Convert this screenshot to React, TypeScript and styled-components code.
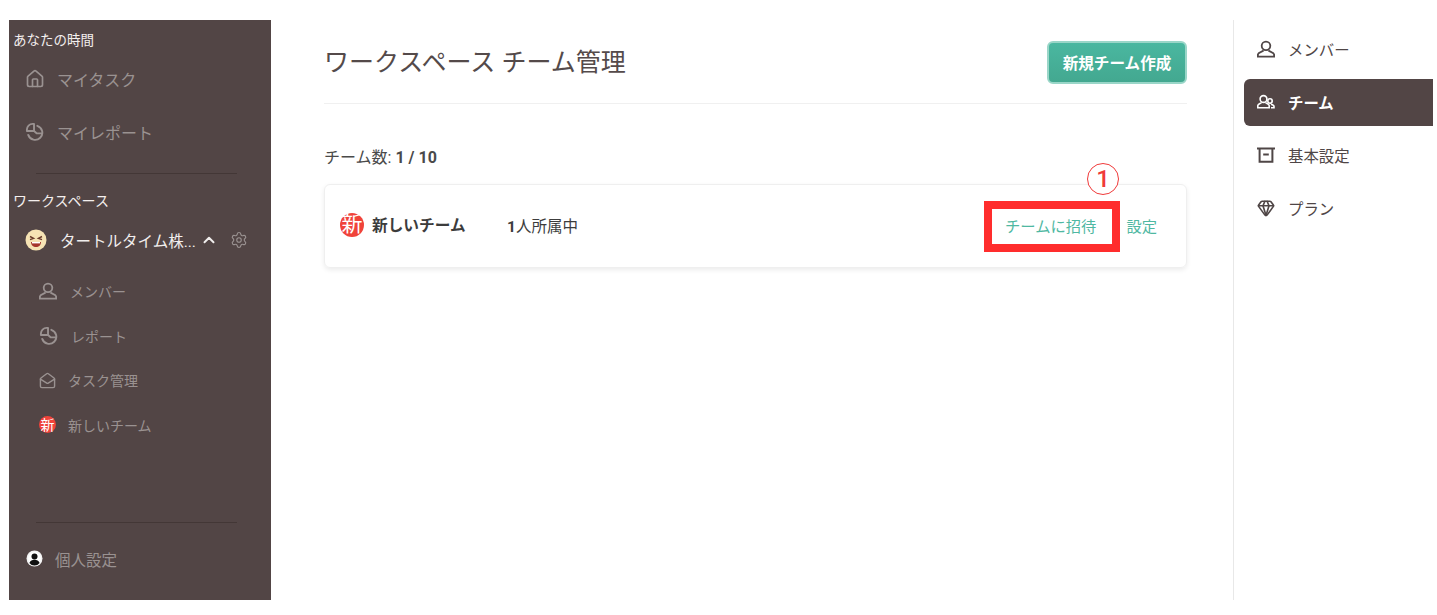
import React from "react"
import styled, { createGlobalStyle } from "styled-components"
import { House, ChevronUp, Settings, MailOpen, Gem } from "lucide-react"

const GlobalStyle = createGlobalStyle`
  html, body {
    margin: 0;
    background: #fff;
    font-family: Roboto, "Noto Sans CJK JP", sans-serif;
  }
`

const brown = "#524545"
const green = "#4fb8a2"
const muted = "#9a9291"

function PieIcon({ size = 20 }: { size?: number }) {
  return (
    <svg width={size} height={size} viewBox="0 0 20 20" fill="none" stroke="currentColor" strokeWidth="2" strokeLinejoin="round" strokeLinecap="round">
      <path d="M2 9.5V8a6 6 0 0 1 6-6h1.5v7.5z" />
      <path d="M13 4a7.6 7.6 0 1 1-9.6 9.6" />
      <path d="M9.5 9.5 12.5 12H17.5" />
    </svg>
  )
}

function UserIcon({ size = 20 }: { size?: number }) {
  return (
    <svg width={size} height={size} viewBox="0 0 20 20" fill="none" stroke="currentColor" strokeWidth="2">
      <circle cx="10" cy="6.5" r="4.8" />
      <path d="M7.2 11.5c-.6 1.7-5.8 1.7-6.2 4.4v2.6h18v-2.6c-.4-2.7-5.6-2.7-6.2-4.4" />
    </svg>
  )
}

function TeamIcon() {
  return (
    <svg width="18" height="16" viewBox="0 0 18 16" fill="none" stroke="#fff" strokeWidth="1.6">
      <circle cx="6.5" cy="5" r="3.4" />
      <path d="M4.4 8.5c-.4 1-3.4 1.3-3.6 3v2.2h11.4v-2.2c-.2-1.7-3.2-2-3.6-3" />
      <circle cx="13" cy="7" r="2.2" />
      <path d="M14 10.2c1.5.4 3 .8 3 2v1.5h-3" />
    </svg>
  )
}

function BoxIcon() {
  return (
    <svg width="18" height="18" viewBox="0 0 18 18" fill="none" stroke="currentColor" strokeWidth="2">
      <path d="M0 2.5h18" />
      <path d="M2.6 2.5v13.2h12.8V2.5" />
      <path d="M6.2 8.5h5.6" />
    </svg>
  )
}

function FaceIcon() {
  return (
    <svg width="22" height="22" viewBox="0 0 22 22">
      <circle cx="11" cy="11" r="10.5" fill="#f6e3b4" />
      <path d="M5 7.5l3.6 1.8L5 10.6M17 7.5l-3.6 1.8 3.6 1.3" fill="none" stroke="#6b3d2c" strokeWidth="1.4" />
      <path d="M6 13h10c0 3-2.2 5-5 5s-5-2-5-5z" fill="#a5352c" />
      <path d="M7 13h8v1.4H7z" fill="#fff" />
    </svg>
  )
}

function AccountIcon() {
  return (
    <svg width="17" height="17" viewBox="0 0 17 17">
      <circle cx="8.5" cy="8.5" r="8" fill="#f4f4f4" />
      <circle cx="8.5" cy="8.5" r="6.4" fill="#fff" />
      <circle cx="8.5" cy="6.4" r="3" fill="#111" />
      <path d="M3.4 13c.8-2.4 2.8-3.2 5.1-3.2s4.3.8 5.1 3.2a6.4 6.4 0 0 1-10.2 0z" fill="#111" />
    </svg>
  )
}

const Page = styled.div`
  width: 1437px;
  height: 615px;
  box-sizing: border-box;
  padding: 20px 4px 15px 9px;
  display: flex;
  overflow: hidden;
`

const Sidebar = styled.aside`
  width: 262px;
  flex: none;
  background: ${brown};
  display: flex;
  flex-direction: column;
`

const SectionLabel = styled.div<{ $top: number; $size?: number }>`
  color: #f4efee;
  font-size: ${(p) => p.$size ?? 14}px;
  line-height: 20px;
  padding-left: 4px;
  margin-top: ${(p) => p.$top}px;
`

const NavRow = styled.div<{ $indent: number; $height: number; $gap: number; $size?: number; $top?: number; $bottom?: number }>`
  display: flex;
  align-items: center;
  height: ${(p) => p.$height}px;
  margin: ${(p) => p.$top ?? 0}px 0 ${(p) => p.$bottom ?? 0}px;
  padding-left: ${(p) => p.$indent}px;
  gap: ${(p) => p.$gap}px;
  color: ${muted};
  font-size: ${(p) => p.$size ?? 16}px;
`

const Divider = styled.div<{ $top: number }>`
  width: 201px;
  height: 1px;
  background: #433736;
  margin: ${(p) => p.$top}px 0 0 27px;
`

const WorkspaceRow = styled.div`
  display: flex;
  align-items: center;
  height: 40px;
  margin-top: 9px;
  padding-left: 16px;
  color: #f1eeed;
  font-size: 15.5px;
`

const WorkspaceName = styled.span`
  margin-left: 13px;
  width: 140px;
  white-space: nowrap;
`

const GearButton = styled.span`
  display: flex;
  color: ${muted};
  margin-left: 12px;
`

const Spacer = styled.div`
  flex: 1;
`

const NewBadge = styled.span<{ $size: number }>`
  display: inline-flex;
  align-items: center;
  justify-content: center;
  flex: none;
  width: ${(p) => p.$size}px;
  height: ${(p) => p.$size}px;
  border-radius: 50%;
  background: #f0433a;
  color: #fff;
  font-size: ${(p) => p.$size - 3}px;
  line-height: 1;
`

const Main = styled.main`
  width: 863px;
  flex: none;
  margin-left: 53px;
`

const Header = styled.header`
  display: flex;
  align-items: center;
  justify-content: space-between;
  height: 83px;
  border-bottom: 1px solid #f0f0f0;
`

const Title = styled.h1`
  margin: 0 0 3px;
  font-size: 25px;
  font-weight: 400;
  color: #544a4a;
`

const PrimaryButton = styled.button`
  width: 140px;
  height: 43px;
  margin-top: 2px;
  padding: 0 0 2px;
  border: 2px solid #9ad6c8;
  border-radius: 6px;
  background: linear-gradient(#4ab7a0, #43a890);
  color: #fff;
  font: 700 15.6px Roboto, "Noto Sans CJK JP", sans-serif;
`

const TeamCount = styled.div`
  margin-top: 44px;
  font-size: 16px;
  line-height: 20px;
  color: #4a4a4a;
  b {
    font-weight: 700;
  }
`

const TeamCard = styled.div`
  position: relative;
  display: flex;
  align-items: center;
  box-sizing: border-box;
  height: 84px;
  margin-top: 16px;
  padding: 0 29px 3px 15px;
  border: 1px solid #efefef;
  border-radius: 6px;
  box-shadow: 0 2px 5px rgba(0, 0, 0, 0.08);
  color: #3c3c3c;
`

const TeamName = styled.span`
  margin-left: 8px;
  width: 135px;
  font-size: 15.7px;
  font-weight: 700;
`

const Members = styled.span`
  font-size: 15.5px;
  b {
    font-weight: 700;
  }
`

const CardActions = styled.div`
  display: flex;
  gap: 30px;
  margin-left: auto;
  color: ${green};
  font-size: 15.3px;
`

// annotations laid over the screenshot
const Highlight = styled.div`
  position: absolute;
  left: 659px;
  top: 16px;
  width: 136px;
  height: 51px;
  box-sizing: border-box;
  border: 8px solid #ff2d2d;
`

const StepMark = styled.span`
  position: absolute;
  left: 762px;
  top: -22px;
  width: 32px;
  height: 32px;
  box-sizing: border-box;
  border: 1.5px solid #f03a3a;
  border-radius: 50%;
  display: flex;
  align-items: center;
  justify-content: center;
  background: #fff;
  color: #f03a3a;
  font-size: 24px;
  font-weight: 500;
`

const RightNav = styled.nav`
  width: 200px;
  flex: none;
  margin-left: 46px;
  border-left: 1px solid #e8e8e8;
  padding: 6px 0 0 10px;
  box-sizing: border-box;
`

const TabRow = styled.div<{ $active?: boolean }>`
  display: flex;
  align-items: center;
  box-sizing: border-box;
  gap: 13px;
  height: 47px;
  margin-bottom: 6px;
  padding: 0 0 2px 13px;
  border-radius: 6px 0 0 6px;
  font-size: 15.4px;
  font-weight: ${(p) => (p.$active ? 700 : 400)};
  background: ${(p) => (p.$active ? brown : "transparent")};
  color: ${(p) => (p.$active ? "#fff" : "#4f4646")};
`

export default function App() {
  return (
    <>
      <GlobalStyle />
      <Page>
        <Sidebar>
          <SectionLabel $top={10} $size={13.5}>あなたの時間</SectionLabel>
          <NavRow $indent={16} $height={53} $gap={12} $top={2}>
            <House size={20} strokeWidth={2} />
            マイタスク
          </NavRow>
          <NavRow $indent={16} $height={53} $gap={13}>
            <PieIcon size={19} />
            マイレポート
          </NavRow>
          <Divider $top={15} />
          <SectionLabel $top={17}>ワークスペース</SectionLabel>
          <WorkspaceRow>
            <FaceIcon />
            <WorkspaceName>タートルタイム株...</WorkspaceName>
            <ChevronUp size={18} strokeWidth={2.6} />
            <GearButton>
              <Settings size={18} strokeWidth={1.5} />
            </GearButton>
          </WorkspaceRow>
          <NavRow $indent={30} $height={45} $gap={13} $size={14} $top={8}>
            <UserIcon size={18} />
            メンバー
          </NavRow>
          <NavRow $indent={30} $height={45} $gap={13} $size={14}>
            <PieIcon size={19} />
            レポート
          </NavRow>
          <NavRow $indent={30} $height={44} $gap={12} $size={14}>
            <MailOpen size={17} strokeWidth={2} />
            タスク管理
          </NavRow>
          <NavRow $indent={30} $height={45} $gap={12} $size={14}>
            <NewBadge $size={17}>新</NewBadge>
            新しいチーム
          </NavRow>
          <Spacer />
          <Divider $top={0} />
          <NavRow $indent={17} $height={71} $gap={12} $size={15.5} $bottom={6}>
            <AccountIcon />
            個人設定
          </NavRow>
        </Sidebar>

        <Main>
          <Header>
            <Title>ワークスペース チーム管理</Title>
            <PrimaryButton>新規チーム作成</PrimaryButton>
          </Header>
          <TeamCount>
            チーム数: <b>1 / 10</b>
          </TeamCount>
          <TeamCard>
            <NewBadge $size={24}>新</NewBadge>
            <TeamName>新しいチーム</TeamName>
            <Members>
              <b>1</b>人所属中
            </Members>
            <CardActions>
              <span>チームに招待</span>
              <span>設定</span>
            </CardActions>
            <Highlight />
            <StepMark>1</StepMark>
          </TeamCard>
        </Main>

        <RightNav>
          <TabRow>
            <UserIcon size={18} />
            メンバー
          </TabRow>
          <TabRow $active>
            <TeamIcon />
            チーム
          </TabRow>
          <TabRow>
            <BoxIcon />
            基本設定
          </TabRow>
          <TabRow>
            <Gem size={18} strokeWidth={2.2} />
            プラン
          </TabRow>
        </RightNav>
      </Page>
    </>
  )
}
